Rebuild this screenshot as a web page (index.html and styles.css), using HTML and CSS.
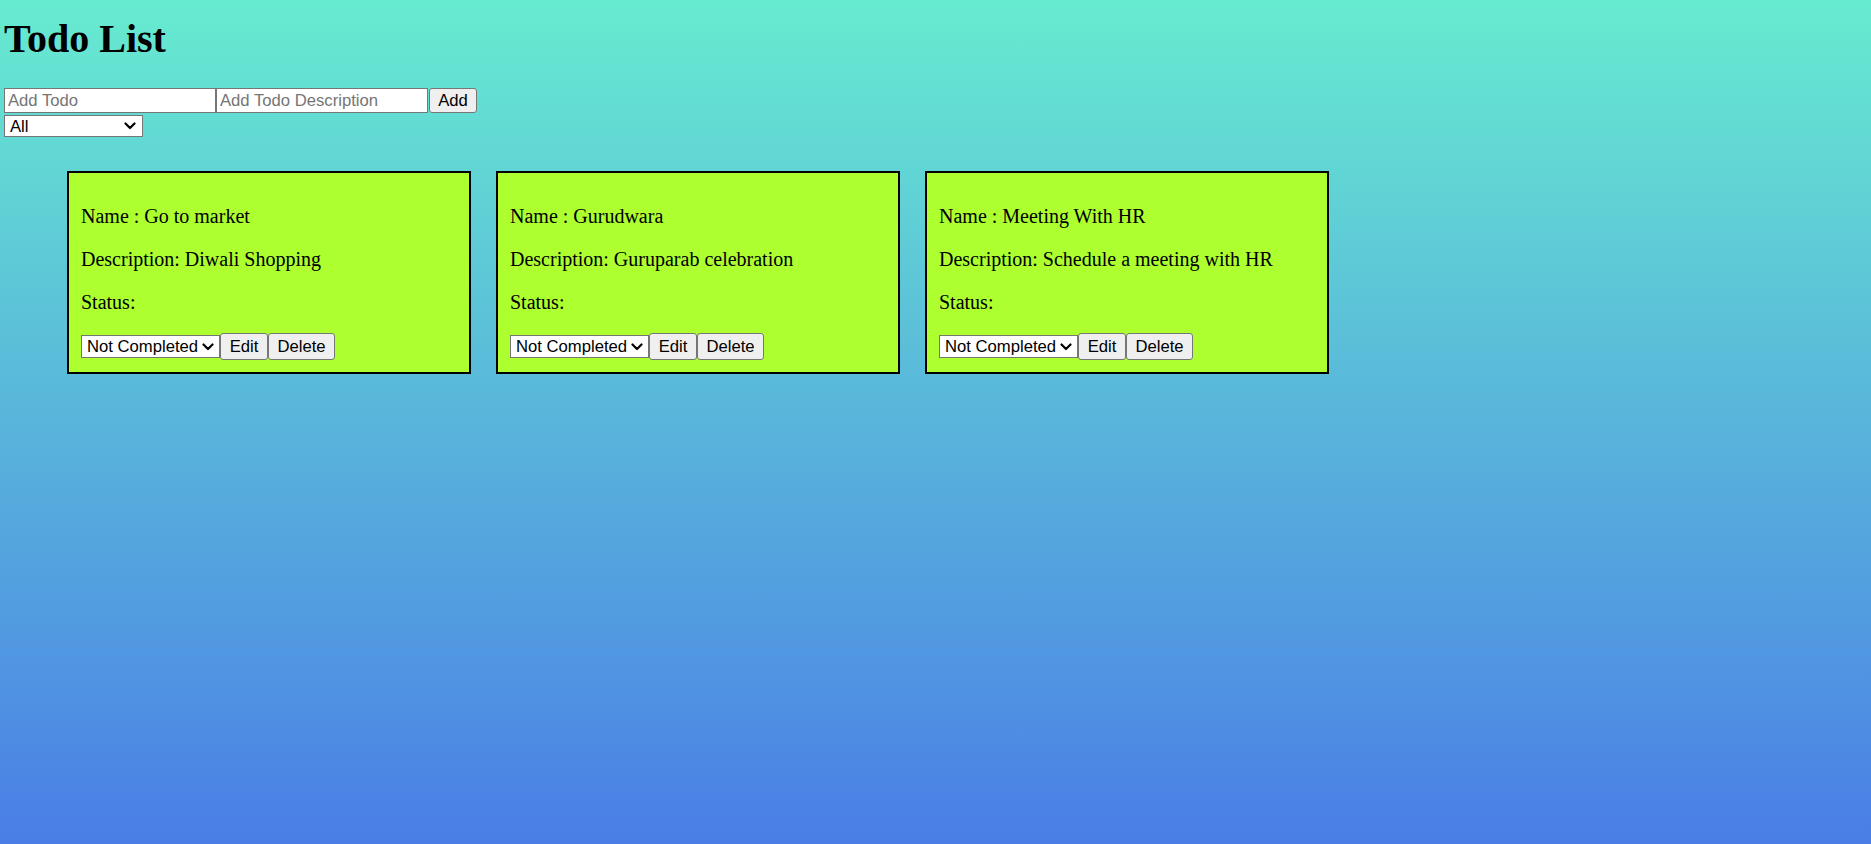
FILE: index.html
```html
<!DOCTYPE html>
<html lang="en">
<head>
<meta charset="utf-8">
<title>Todo List</title>
<link rel="stylesheet" href="styles.css">
</head>
<body>
<div class="app">
  <h1 class="title">Todo List</h1>
  <div class="add-row">
    <input class="field" type="text" placeholder="Add Todo">
    <input class="field" type="text" placeholder="Add Todo Description">
    <button class="btn btn-add">Add</button>
  </div>
  <div class="filter-row">
    <select class="sel sel-filter">
      <option>All</option>
      <option>Completed</option>
      <option>Not Completed</option>
    </select>
  </div>
  <div class="cards">
    <div class="card">
      <p class="line">Name : Go to market</p>
      <p class="line">Description: Diwali Shopping</p>
      <p class="line">Status:</p>
      <div class="actions">
        <select class="sel sel-status"><option>Not Completed</option><option>Completed</option></select>
        <button class="btn btn-edit">Edit</button>
        <button class="btn btn-delete">Delete</button>
      </div>
    </div>
    <div class="card">
      <p class="line">Name : Gurudwara</p>
      <p class="line">Description: Guruparab celebration</p>
      <p class="line">Status:</p>
      <div class="actions">
        <select class="sel sel-status"><option>Not Completed</option><option>Completed</option></select>
        <button class="btn btn-edit">Edit</button>
        <button class="btn btn-delete">Delete</button>
      </div>
    </div>
    <div class="card">
      <p class="line">Name : Meeting With HR</p>
      <p class="line">Description: Schedule a meeting with HR</p>
      <p class="line">Status:</p>
      <div class="actions">
        <select class="sel sel-status"><option>Not Completed</option><option>Completed</option></select>
        <button class="btn btn-edit">Edit</button>
        <button class="btn btn-delete">Delete</button>
      </div>
    </div>
  </div>
</div>
</body>
</html>
```

FILE: styles.css
```css
html {
  height: 100%;
  background: linear-gradient(to bottom, #67ebd0 0%, #4a7ee6 100%);
  background-attachment: fixed;
}

body {
  margin: 0;
  min-height: 100%;
  font-family: "Liberation Serif", "Times New Roman", serif;
  font-size: 20px;
  color: #000;
}

.app {
  padding: 0 4px;
}

.title {
  margin: 16px 0 26px;
  font-size: 40px;
  line-height: 46px;
  font-weight: bold;
}

.add-row {
  display: flex;
  height: 25px;
}

.field {
  box-sizing: border-box;
  width: 212px;
  height: 25px;
  margin: 0;
  padding: 1px 3px;
  border: 1px solid #767676;
  border-radius: 0;
  background: #fff;
  font-family: "Liberation Sans", Arial, sans-serif;
  font-size: 16.67px;
  color: #000;
  outline: none;
}

.field::placeholder {
  color: #757575;
}

.btn {
  box-sizing: border-box;
  margin: 0;
  padding: 0;
  border: 1px solid #767676;
  border-radius: 3px;
  background: #efefef;
  font-family: "Liberation Sans", Arial, sans-serif;
  font-size: 16.67px;
  color: #000;
  text-align: center;
}

.btn-add {
  width: 48px;
  height: 25px;
  margin-left: 1px;
}

.filter-row {
  margin-top: 2px;
  height: 22px;
  display: flex;
}

.sel {
  box-sizing: border-box;
  margin: 0;
  border: 1px solid #767676;
  border-radius: 0;
  background-color: #fff;
  background-image: url("data:image/svg+xml;utf8,<svg xmlns='http://www.w3.org/2000/svg' width='12' height='8' viewBox='0 0 12 8'><path d='M1.5 1.5 L6 6 L10.5 1.5' fill='none' stroke='black' stroke-width='2.2' stroke-linecap='round' stroke-linejoin='round'/></svg>");
  background-repeat: no-repeat;
  -webkit-appearance: none;
  appearance: none;
  font-family: "Liberation Sans", Arial, sans-serif;
  font-size: 16.67px;
  color: #000;
  line-height: 19px;
}

.sel-filter {
  width: 139px;
  height: 22px;
  padding: 0 20px 0 5px;
  background-position: right 6px center;
}

.cards {
  display: flex;
  gap: 25.5px;
  margin-top: 34px;
  padding-left: 63px;
}

.card {
  box-sizing: border-box;
  flex: none;
  width: 403.5px;
  height: 203px;
  padding: 12px 12px 11px;
  border: 2px solid #000;
  background: #adff2f;
}

.line {
  margin: 20px 0;
  line-height: 23px;
}

.actions {
  display: flex;
  align-items: center;
  height: 27px;
  margin-top: -1px;
}

.sel-status {
  width: 139px;
  height: 23px;
  padding: 0 18px 0 5px;
  background-position: right 5px center;
}

.btn-edit {
  width: 48px;
  height: 27px;
}

.btn-delete {
  width: 67px;
  height: 27px;
}
```
